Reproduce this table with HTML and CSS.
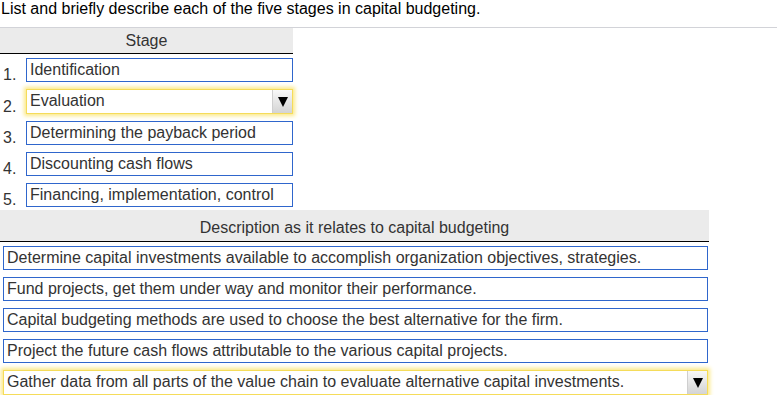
FILE: index.html
```html
<!DOCTYPE html>
<html>
<head>
<meta charset="utf-8">
<link rel="stylesheet" href="styles.css">
</head>
<body>
<div class="question">List and briefly describe each of the five stages in capital budgeting.</div>
<div class="stage-table">
  <div class="th stage-th">Stage</div>
  <div class="stage-rows">
    <div class="stage-row"><span class="num">1.</span><div class="box">Identification</div></div>
    <div class="stage-row"><span class="num">2.</span><div class="box select"><span class="val">Evaluation</span><span class="btn"><span class="tri"></span></span></div></div>
    <div class="stage-row"><span class="num">3.</span><div class="box">Determining the payback period</div></div>
    <div class="stage-row"><span class="num">4.</span><div class="box">Discounting cash flows</div></div>
    <div class="stage-row"><span class="num">5.</span><div class="box">Financing, implementation, control</div></div>
  </div>
</div>
<div class="desc-table">
  <div class="th desc-th">Description as it relates to capital budgeting</div>
  <div class="desc-rows">
    <div class="box">Determine capital investments available to accomplish organization objectives, strategies.</div>
    <div class="box">Fund projects, get them under way and monitor their performance.</div>
    <div class="box">Capital budgeting methods are used to choose the best alternative for the firm.</div>
    <div class="box">Project the future cash flows attributable to the various capital projects.</div>
    <div class="box select"><span class="val">Gather data from all parts of the value chain to evaluate alternative capital investments.</span><span class="btn"><span class="tri"></span></span></div>
  </div>
</div>
</body>
</html>
```
FILE: styles.css
```css
html, body {
  margin: 0;
  padding: 0;
  background: #fff;
  font-family: "Liberation Sans", Arial, Helvetica, sans-serif;
  font-size: 16px;
}
.question {
  box-sizing: border-box;
  height: 28px;
  line-height: 18px;
  padding-left: 1px;
  color: #000;
  border-bottom: 1px solid #d2d3d8;
}
.stage-table {
  width: 293px;
}
.th {
  background: #ebebeb;
  color: #333;
  text-align: center;
  border-bottom: 1px solid #000;
  box-sizing: border-box;
}
.stage-th {
  height: 26px;
  line-height: 25px;
}
.stage-rows {
  display: flex;
  flex-direction: column;
  gap: 7px;
  padding-top: 4px;
}
.stage-row {
  display: flex;
  align-items: flex-end;
}
.num {
  width: 26px;
  padding-left: 3px;
  box-sizing: border-box;
  color: #333;
  line-height: 18px;
  margin-bottom: -2px;
}
.box {
  box-sizing: border-box;
  height: 24px;
  border: 1px solid #2f66cc;
  color: #333;
  line-height: 22px;
  padding-left: 3px;
  background: #fff;
  white-space: nowrap;
}
.stage-row .box {
  width: 267px;
}
.box.select {
  display: flex;
  justify-content: space-between;
  border: 1px solid #f5dc5a;
  box-shadow: 0 0 4px 2px #fbe989;
  padding-right: 0;
  height: 25px;
}
.btn {
  width: 19px;
  height: 23px;
  background: linear-gradient(#f8f8f8, #d4d4d4);
  border-left: 1px solid #cfcfcf;
  display: flex;
  align-items: center;
  justify-content: center;
}
.tri {
  width: 0;
  height: 0;
  border-left: 5px solid transparent;
  border-right: 5px solid transparent;
  border-top: 10px solid #000;
}
.desc-table {
  width: 709px;
  margin-top: 3px;
}
.desc-th {
  height: 32px;
  line-height: 36px;
}
.desc-rows {
  display: flex;
  flex-direction: column;
  gap: 7px;
  padding: 4px 0 0 3px;
}
.desc-rows .box {
  width: 705px;
}
```
